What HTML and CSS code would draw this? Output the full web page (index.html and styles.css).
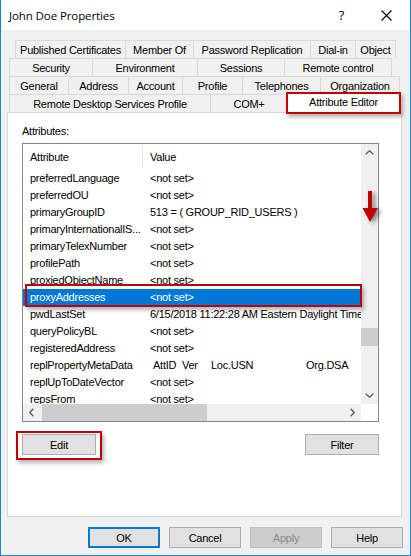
FILE: index.html
```html
<!DOCTYPE html>
<html>
<head>
<meta charset="utf-8">
<title>John Doe Properties</title>
<link rel="stylesheet" href="styles.css">
</head>
<body>
<div class="window">
  <div class="titlebar">
    <span class="title">John Doe Properties</span>
    <span class="tb-btn tb-help">?</span>
    <span class="tb-btn tb-close"><svg width="11" height="11" viewBox="0 0 11 11"><path d="M0.5 0.5 L10.5 10.5 M10.5 0.5 L0.5 10.5" stroke="#000" stroke-width="1.1" fill="none"/></svg></span>
  </div>

  <div class="tabs">
    <div class="tabrow r1">
      <div class="tab">Published Certificates</div>
      <div class="tab">Member Of</div>
      <div class="tab">Password Replication</div>
      <div class="tab">Dial-in</div>
      <div class="tab">Object</div>
    </div>
    <div class="tabrow r2">
      <div class="tab">Security</div>
      <div class="tab">Environment</div>
      <div class="tab">Sessions</div>
      <div class="tab">Remote control</div>
    </div>
    <div class="tabrow r3">
      <div class="tab">General</div>
      <div class="tab">Address</div>
      <div class="tab">Account</div>
      <div class="tab">Profile</div>
      <div class="tab">Telephones</div>
      <div class="tab">Organization</div>
    </div>
    <div class="tabrow r4">
      <div class="tab">Remote Desktop Services Profile</div>
      <div class="tab">COM+</div>
      <div class="tab sel">Attribute Editor</div>
    </div>
  </div>

  <div class="panel">
    <div class="label">Attributes:</div>
    <div class="listbox">
      <div class="lv">
        <div class="hdr">
          <div class="hcell hcol1">Attribute</div>
          <div class="hcell hcol2">Value</div>
        </div>
        <div class="row"><div class="c1">preferredLanguage</div><div class="c2">&lt;not set&gt;</div></div>
        <div class="row"><div class="c1">preferredOU</div><div class="c2">&lt;not set&gt;</div></div>
        <div class="row"><div class="c1">primaryGroupID</div><div class="c2">513 = ( GROUP_RID_USERS )</div></div>
        <div class="row"><div class="c1">primaryInternationalIS...</div><div class="c2">&lt;not set&gt;</div></div>
        <div class="row"><div class="c1">primaryTelexNumber</div><div class="c2">&lt;not set&gt;</div></div>
        <div class="row"><div class="c1">profilePath</div><div class="c2">&lt;not set&gt;</div></div>
        <div class="row"><div class="c1">proxiedObjectName</div><div class="c2">&lt;not set&gt;</div></div>
        <div class="row selected"><div class="c1">proxyAddresses</div><div class="c2">&lt;not set&gt;</div></div>
        <div class="row"><div class="c1">pwdLastSet</div><div class="c2">6/15/2018 11:22:28 AM Eastern Daylight Time</div></div>
        <div class="row"><div class="c1">queryPolicyBL</div><div class="c2">&lt;not set&gt;</div></div>
        <div class="row"><div class="c1">registeredAddress</div><div class="c2">&lt;not set&gt;</div></div>
        <div class="row"><div class="c1">replPropertyMetaData</div><div class="c2 meta"><span class="m-attid">AttID</span><span class="m-ver">Ver</span><span class="m-usn">Loc.USN</span><span>Org.DSA</span></div></div>
        <div class="row"><div class="c1">replUpToDateVector</div><div class="c2">&lt;not set&gt;</div></div>
        <div class="row"><div class="c1">repsFrom</div><div class="c2">&lt;not set&gt;</div></div>
      </div>
      <div class="vsb">
        <div class="sb-btn"><svg width="9" height="5" viewBox="0 0 9 5"><polyline points="0.7,4.3 4.5,0.8 8.3,4.3" fill="none" stroke="#606060" stroke-width="1.4"/></svg></div>
        <div class="vtrack"><div class="vthumb"></div></div>
        <div class="sb-btn"><svg width="9" height="5" viewBox="0 0 9 5"><polyline points="0.7,0.7 4.5,4.2 8.3,0.7" fill="none" stroke="#606060" stroke-width="1.4"/></svg></div>
      </div>
      <div class="hsb">
        <div class="sb-btn"><svg width="5" height="9" viewBox="0 0 5 9"><polyline points="4.3,0.7 0.8,4.5 4.3,8.3" fill="none" stroke="#606060" stroke-width="1.4"/></svg></div>
        <div class="htrack"><div class="hthumb"></div></div>
        <div class="sb-btn"><svg width="5" height="9" viewBox="0 0 5 9"><polyline points="0.7,0.7 4.2,4.5 0.7,8.3" fill="none" stroke="#606060" stroke-width="1.4"/></svg></div>
      </div>
      <div class="corner"></div>
    </div>
    <div class="btnrow">
      <div class="btn">Edit</div>
      <div class="btn">Filter</div>
    </div>
  </div>

  <div class="footer">
    <div class="btn default">OK</div>
    <div class="btn">Cancel</div>
    <div class="btn disabled">Apply</div>
    <div class="btn">Help</div>
  </div>

  <div class="mark mark-tab"></div>
  <div class="mark mark-row"></div>
  <div class="mark mark-edit"></div>
  <svg class="red-arrow" width="17" height="33" viewBox="0 0 17 33"><path d="M6 1 H10 V18 H16 L8 32 L0.5 18 H6 Z" fill="#c00000"/></svg>
</div>
</body>
</html>
```

FILE: styles.css
```css
* { box-sizing: border-box; }
html, body { margin: 0; padding: 0; }
body {
  width: 411px;
  height: 556px;
  overflow: hidden;
  background: #fff;
  font-family: "Liberation Sans", Arial, sans-serif;
  font-size: 11px;
  letter-spacing: -0.25px;
  color: #000;
}
.window {
  position: relative;
  width: 411px;
  height: 556px;
  border: 1px solid #1883d7;
  border-top: none;
  background: #f0f0f0;
  display: flex;
  flex-direction: column;
}

/* title bar */
.titlebar {
  flex: none;
  height: 30px;
  background: #fff;
  display: flex;
  align-items: center;
  padding-right: 1px;
}
.title {
  flex: 1;
  padding-left: 8px;
  font-family: "Open Sans", "Noto Sans", sans-serif;
  font-size: 11.5px;
  letter-spacing: -0.1px;
}
.tb-btn {
  width: 45px;
  height: 30px;
  display: flex;
  align-items: center;
  justify-content: center;
}
.tb-help {
  font-family: "Open Sans", "Noto Sans", sans-serif;
  font-size: 13px;
  letter-spacing: 0;
}

/* tabs */
.tabs {
  flex: none;
  margin-top: 10px;
  margin-left: 8px;
}
.tabrow {
  display: grid;
  height: 18px;
}
.r1 { margin-left: 6px; grid-template-columns: 110px 68px 117px 45px 41px; }
.r2 { grid-template-columns: 83px 105px 87px 108px; }
.r3 { grid-template-columns: 59px 60px 54px 60px 78px 80px; }
.r4 { grid-template-columns: 201px 77px 113px; }
.tab {
  border-top: 1px solid #d9d9d9;
  border-left: 1px solid #d9d9d9;
  display: flex;
  align-items: center;
  justify-content: center;
  white-space: nowrap;
  padding-top: 1px;
}
.tab:last-child { border-right: 1px solid #d9d9d9; }
.tab.sel {
  position: relative;
  z-index: 1;
  background: #fff;
  margin: -2px -1px -1px -1px;
  padding-top: 0;
  padding-bottom: 2px;
}

/* panel */
.panel {
  flex: none;
  margin-left: 6px;
  width: 395px;
  height: 405px;
  background: #fff;
  border: 1px solid #d9d9d9;
  padding: 12px 0 0 14px;
}
.label {
  height: 13px;
  line-height: 13px;
}
.listbox {
  margin-top: 5px;
  width: 357px;
  height: 279px;
  border: 1px solid #828790;
  display: grid;
  grid-template-columns: 338px 17px;
  grid-template-rows: 260px 17px;
  background: #fff;
}
.lv {
  overflow: hidden;
  white-space: nowrap;
}
.hdr {
  display: grid;
  grid-template-columns: 121px 1fr;
  height: 26px;
  line-height: 26px;
}
.hcol1 {
  padding-left: 7px;
  background: linear-gradient(#e5e5e5, #e5e5e5) right 1px top 1px / 1px 23px no-repeat;
}
.hcol2 { padding-left: 6px; }
.row {
  display: grid;
  grid-template-columns: 120px 1fr;
  height: 17px;
  line-height: 17px;
}
.c1, .c2 {
  padding-left: 7px;
  overflow: hidden;
  white-space: nowrap;
}
.row.selected {
  background: #0078d7;
  color: #fff;
}
.meta { display: flex; }
.m-attid { margin-left: 3px; width: 29px; }
.m-ver { width: 29px; }
.m-usn { width: 95px; }

/* scrollbars */
.vsb {
  background: #f0f0f0;
  display: flex;
  flex-direction: column;
}
.sb-btn {
  flex: none;
  width: 17px;
  height: 17px;
  display: flex;
  align-items: center;
  justify-content: center;
}
.vtrack { flex: 1; }
.vthumb {
  margin-top: 167px;
  height: 18px;
  background: #cdcdcd;
}
.hsb {
  background: #f0f0f0;
  display: flex;
}
.htrack { flex: 1; }
.hthumb {
  margin-left: 2px;
  width: 165px;
  height: 17px;
  background: #cdcdcd;
}
.corner { background: #fff; }

/* buttons */
.btnrow {
  width: 357px;
  margin-top: 12px;
  display: flex;
  justify-content: space-between;
}
.btn {
  width: 74px;
  height: 21px;
  background: #e1e1e1;
  border: 1px solid #adadad;
  display: flex;
  align-items: center;
  justify-content: center;
}
.footer {
  flex: none;
  display: flex;
  justify-content: flex-end;
  gap: 9px;
  padding-right: 7px;
  margin-top: 10px;
}
.footer .btn { width: 72px; }
.btn.default { border: 2px solid #0078d7; }
.btn.disabled {
  background: #cccccc;
  border-color: #bfbfbf;
  color: #8a8a8a;
}

/* red annotations */
.mark {
  position: absolute;
  border: 2px solid #c00000;
  box-shadow: 2px 3px 4px rgba(0, 0, 0, 0.3);
  z-index: 5;
}
.mark-tab { left: 285px; top: 92px; width: 115px; height: 22px; }
.mark-row { left: 24px; top: 284px; width: 337px; height: 23px; }
.mark-edit { left: 15px; top: 431px; width: 86px; height: 29px; }
.red-arrow {
  position: absolute;
  left: 361px;
  top: 190px;
  z-index: 5;
  filter: drop-shadow(3px 2px 2px rgba(0, 0, 0, 0.45));
}
```
